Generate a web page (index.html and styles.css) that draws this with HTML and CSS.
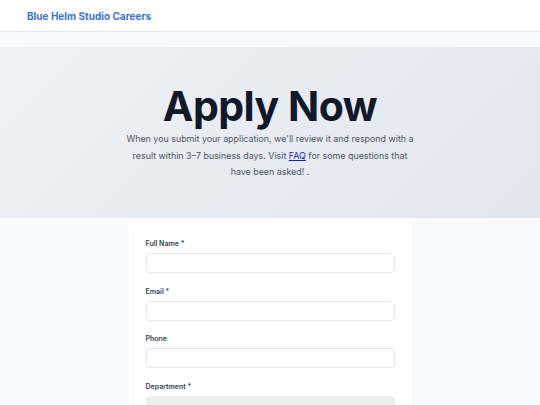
FILE: index.html
```html
<!DOCTYPE html>
<html lang="en">
<head>
<meta charset="utf-8">
<title>Apply Now – Blue Helm Studio Careers</title>
<link rel="stylesheet" href="styles.css">
</head>
<body>
<header class="site-header">
  <a class="brand" href="#">Blue Helm Studio Careers</a>
</header>
<main class="page">
  <section class="hero">
    <h1 class="hero-title">Apply Now</h1>
    <p class="hero-text">When you submit your application, we'll review it and respond with a result within 3–7 business days. Visit <a href="#" class="faq-link">FAQ</a> for some questions that have been asked! .</p>
  </section>
  <section class="form-card">
    <form class="apply-form">
      <div class="field">
        <label class="field-label" for="name">Full Name *</label>
        <input class="field-input" id="name" type="text">
      </div>
      <div class="field">
        <label class="field-label" for="email">Email *</label>
        <input class="field-input" id="email" type="email">
      </div>
      <div class="field">
        <label class="field-label" for="phone">Phone</label>
        <input class="field-input" id="phone" type="tel">
      </div>
      <div class="field">
        <label class="field-label" for="dept">Department *</label>
        <div class="field-select" id="dept"></div>
      </div>
    </form>
  </section>
</main>
</body>
</html>
```
FILE: styles.css
```css
* { box-sizing: border-box; }
html, body { margin: 0; padding: 0; }
body {
  font-family: Inter, "Noto Sans", sans-serif;
  background: #f8fafc;
  color: #111827;
  width: 540px;
  height: 405px;
  overflow: hidden;
}
.site-header {
  height: 32px;
  background: #ffffff;
  border-bottom: 1px solid #e5e7eb;
  display: flex;
  align-items: center;
  padding-left: 27px;
}
.brand {
  color: #3b6fd8;
  font-weight: 700;
  font-size: 10px;
  text-decoration: none;
}
.page {
  padding-top: 15px;
}
.hero {
  height: 171px;
  background: linear-gradient(135deg, #eef2f8 0%, #e7ecf3 50%, #e1e7ef 100%);
  display: flex;
  flex-direction: column;
  align-items: center;
  padding-top: 34px;
}
.hero-title {
  margin: 0;
  font-size: 41px;
  line-height: 50px;
  font-weight: 700;
  letter-spacing: -0.5px;
  color: #111827;
}
.hero-text {
  margin: 0;
  width: 292px;
  text-align: center;
  font-size: 8.9px;
  line-height: 16.5px;
  color: #4b5563;
}
.faq-link { color: #1d1dbd; line-height: 1; }
.form-card {
  width: 283px;
  margin: 1px auto 0;
  background: #ffffff;
  border-radius: 6px 6px 0 0;
  padding: 20px 17px 20px;
}
.apply-form {
  display: flex;
  flex-direction: column;
  gap: 13.5px;
}
.field {
  display: flex;
  flex-direction: column;
  gap: 5px;
}
.field-label {
  font-size: 7px;
  font-weight: 600;
  line-height: 9px;
  color: #374151;
}
.field-input, .field-select {
  height: 20px;
  width: 100%;
  border: 1px solid #e5e7eb;
  border-radius: 4px;
  background: #ffffff;
  font: inherit;
}
.field-select {
  background: #eeeeee;
  border-color: #eeeeee;
}
```
